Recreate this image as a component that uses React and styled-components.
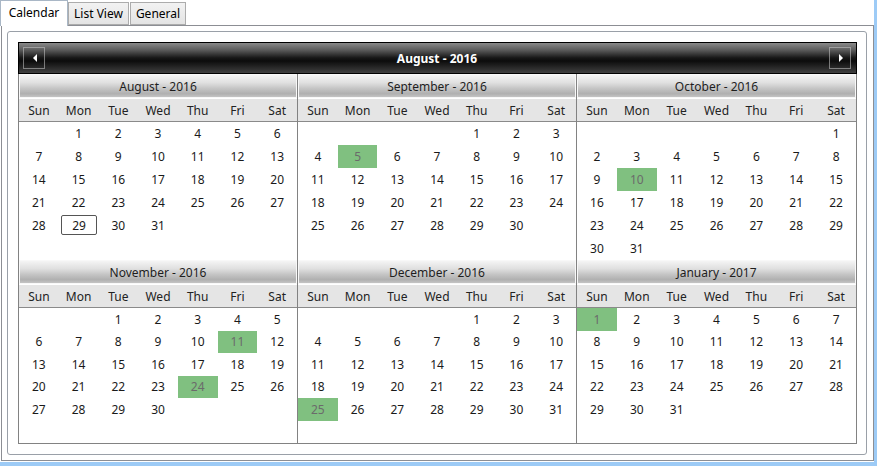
import React from 'react';
import styled, { createGlobalStyle } from 'styled-components';

const GlobalStyle = createGlobalStyle`
  html, body { margin: 0; padding: 0; }
  body {
    background: #9dcbf6;
    font-family: "Noto Sans", "Open Sans", sans-serif;
  }
`;

const Window = styled.div`
  width: 874px;
  height: 462px;
  background: #fff;
  display: flex;
  flex-direction: column;
  box-sizing: border-box;
`;

const TabStrip = styled.div`
  display: flex;
  align-items: flex-end;
  height: 25px;
  position: relative;
  z-index: 2;
`;

const Tab = styled.div`
  box-sizing: border-box;
  width: ${(p) => p.$w}px;
  height: ${(p) => (p.$active ? '26px' : '23px')};
  margin-bottom: ${(p) => (p.$active ? '-1px' : '0')};
  margin-right: ${(p) => (p.$active ? '0' : '1px')};
  border: 1px solid ${(p) => (p.$active ? '#a9b7c6' : '#acacac')};
  border-bottom: ${(p) => (p.$active ? 'none' : '1px solid #acacac')};
  background: ${(p) =>
    p.$active ? '#fff' : 'linear-gradient(to bottom, #f2f2f2, #e4e4e4)'};
  display: flex;
  align-items: center;
  justify-content: center;
  padding-bottom: ${(p) => (p.$active ? '3px' : '0')};
  font-size: 12px;
  color: #000;
`;

const TabContent = styled.div`
  flex: 1;
  margin: 0 0 1px 1px;
  border: 1px solid #8c8e94;
  display: flex;
  box-sizing: border-box;
  min-height: 0;
`;

const Panel = styled.div`
  flex: 1;
  margin: 5px 6px 5px 5px;
  border: 1px solid #9aa0a8;
  border-radius: 3px;
  padding: 10px 9px 10px 10px;
  display: flex;
  min-height: 0;
`;

const Calendar = styled.div`
  flex: 1;
  display: flex;
  flex-direction: column;
  min-height: 0;
`;

const NavBar = styled.div`
  height: 32px;
  box-sizing: border-box;
  border: 1px solid #000;
  background: linear-gradient(
    to bottom,
    #8a8a8a 0%,
    #5e5e5e 22%,
    #161616 50%,
    #0c0c0c 60%,
    #2c2c2c 85%,
    #404040 100%
  );
  display: flex;
  align-items: center;
  justify-content: space-between;
  padding: 0 5px 0 4px;
`;

const NavButton = styled.div`
  width: 22px;
  height: 22px;
  box-sizing: border-box;
  border: 1px solid rgba(200, 200, 200, 0.55);
  display: flex;
  align-items: center;
  justify-content: center;
`;

const Arrow = styled.span`
  width: 0;
  height: 0;
  border-top: 4px solid transparent;
  border-bottom: 4px solid transparent;
  ${(p) =>
    p.$dir === 'left'
      ? 'border-right: 4px solid #fff; margin-left: 2px;'
      : 'border-left: 4px solid #fff; margin-left: 2px;'}
`;

const NavTitle = styled.div`
  color: #fff;
  font-weight: bold;
  font-size: 12px;
`;

const MonthsGrid = styled.div`
  flex: 1;
  display: grid;
  grid-template-columns: repeat(3, 1fr);
  grid-template-rows: 186px 1fr;
  border: 1px solid #828282;
  border-top: none;
  min-height: 0;
`;

const MonthBlock = styled.div`
  display: flex;
  flex-direction: column;
  box-sizing: border-box;
  border-right: ${(p) => (p.$last ? 'none' : '1px solid #828282')};
  min-height: 0;
`;

const MonthHeader = styled.div`
  height: 24px;
  box-sizing: border-box;
  border: 1px solid #f8f8f8;
  background: linear-gradient(
    to bottom,
    #f4f4f4 0%,
    #e0e0e0 35%,
    #c4c4c4 62%,
    #b0b0b0 85%,
    #c4c4c4 100%
  );
  display: flex;
  align-items: center;
  justify-content: center;
  font-size: 12px;
  color: #1e1e1e;
`;

const DayNames = styled.div`
  height: 24px;
  box-sizing: border-box;
  display: grid;
  grid-template-columns: repeat(7, 1fr);
  background: #e5e5e5;
  border-top: 1px solid #fff;
  border-bottom: 1px solid #8a8a8a;
`;

const DayName = styled.div`
  display: flex;
  align-items: center;
  justify-content: center;
  font-size: 12px;
  color: #222;
`;

const DatesGrid = styled.div`
  flex: 1;
  display: grid;
  grid-template-columns: repeat(7, 1fr);
  grid-template-rows: repeat(6, 1fr);
  min-height: 0;
`;

const DateCell = styled.div`
  display: flex;
  align-items: center;
  justify-content: center;
  font-size: 12px;
  box-sizing: border-box;
  color: ${(p) => (p.$marked ? '#6b6b6b' : '#1a1a1a')};
  background: ${(p) => (p.$marked ? '#80c080' : 'transparent')};
  ${(p) =>
    p.$today
      ? 'border: 1px solid #555; border-radius: 2px; margin: 1px 1px 2px 2px;'
      : ''}
`;

const DAY_NAMES = ['Sun', 'Mon', 'Tue', 'Wed', 'Thu', 'Fri', 'Sat'];
const MONTH_NAMES = [
  'January', 'February', 'March', 'April', 'May', 'June', 'July',
  'August', 'September', 'October', 'November', 'December',
];

const MONTHS = [
  [2016, 7], [2016, 8], [2016, 9],
  [2016, 10], [2016, 11], [2017, 0],
];

const MARKED = new Set(['2016-8-5', '2016-9-10', '2016-10-11', '2016-10-24', '2016-11-25', '2017-0-1']);
const TODAY = '2016-7-29';

function buildCells(year, month) {
  const first = new Date(year, month, 1).getDay();
  const days = new Date(year, month + 1, 0).getDate();
  const cells = [];
  for (let i = 0; i < 42; i++) {
    const d = i - first + 1;
    cells.push(d >= 1 && d <= days ? d : null);
  }
  return cells;
}

function Month({ year, month, last }) {
  const cells = buildCells(year, month);
  return (
    <MonthBlock $last={last}>
      <MonthHeader>{`${MONTH_NAMES[month]} - ${year}`}</MonthHeader>
      <DayNames>
        {DAY_NAMES.map((n) => (
          <DayName key={n}>{n}</DayName>
        ))}
      </DayNames>
      <DatesGrid>
        {cells.map((d, i) => {
          const key = `${year}-${month}-${d}`;
          return (
            <DateCell key={i} $marked={d && MARKED.has(key)} $today={d && key === TODAY}>
              {d || ''}
            </DateCell>
          );
        })}
      </DatesGrid>
    </MonthBlock>
  );
}

export default function App() {
  return (
    <>
      <GlobalStyle />
      <Window>
        <TabStrip>
          <Tab $active $w={68}>Calendar</Tab>
          <Tab $w={61}>List View</Tab>
          <Tab $w={56}>General</Tab>
        </TabStrip>
        <TabContent>
          <Panel>
            <Calendar>
              <NavBar>
                <NavButton>
                  <Arrow $dir="left" />
                </NavButton>
                <NavTitle>August - 2016</NavTitle>
                <NavButton>
                  <Arrow $dir="right" />
                </NavButton>
              </NavBar>
              <MonthsGrid>
                {MONTHS.map(([y, m], i) => (
                  <Month key={`${y}-${m}`} year={y} month={m} last={i % 3 === 2} />
                ))}
              </MonthsGrid>
            </Calendar>
          </Panel>
        </TabContent>
      </Window>
    </>
  );
}
